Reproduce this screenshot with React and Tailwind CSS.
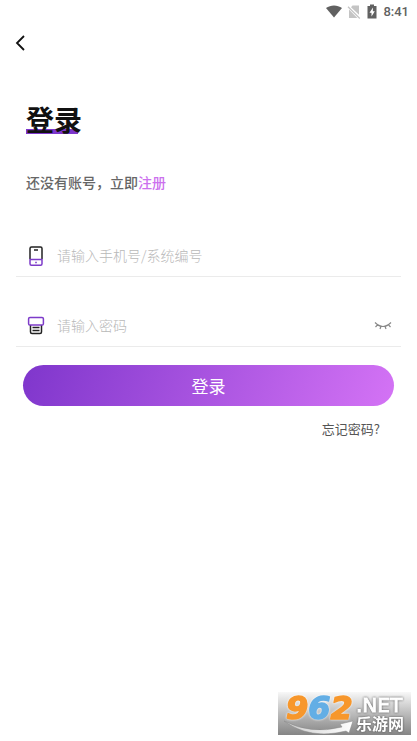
import React from "react";

function StatusBar() {
  return (
    <div className="flex h-6 items-center justify-end px-[2px] text-[#616161]">
      <svg className="h-4 w-4" viewBox="0 0 16 16" aria-hidden="true">
        <path d="M0 4C4.600 0.600 11.400 0.600 16 4L8 13.500Z" fill="currentColor" />
      </svg>
      <svg className="ml-1 h-4 w-4" viewBox="0 0 16 16" aria-hidden="true">
        <path d="M6.500 1.500H13V10.800L5 3.300ZM3 5.500L11.300 14H3Z" fill="#c4c4c4" />
        <path d="M2 2.800L13.800 14.500" stroke="#c4c4c4" strokeWidth="1.200" />
      </svg>
      <svg className="ml-1 h-4 w-3" viewBox="0 0 12 16" aria-hidden="true">
        <path d="M4 0.500h4v1.500h2.500V14.500h-9V2H4Z" fill="currentColor" />
        <path d="M7 3.500L3.500 8.700H5.500V12.500L8.800 7.300H6.800Z" fill="#fff" />
      </svg>
      <span className="ml-[5px] font-[Roboto,sans-serif] text-[13px] leading-4 font-medium">8:41</span>
    </div>
  );
}

function PhoneIcon() {
  return (
    <svg className="h-5 w-5 shrink-0" viewBox="0 0 20 20" fill="none" strokeWidth="1.500" aria-hidden="true">
      <path d="M4 13V2.500Q4 1 5.500 1H14.500Q16 1 16 2.500V13" stroke="#222" />
      <path d="M8 4H12" stroke="#222" />
      <path d="M4 13.600H16V17.700Q16 19.200 14.600 19.200H5.400Q4 19.200 4 17.700Z" stroke="#7d3bc9" />
      <path d="M9.200 16.500H10.800" stroke="#7d3bc9" strokeWidth="1.600" />
    </svg>
  );
}

function PasswordIcon() {
  return (
    <svg className="h-5 w-5 shrink-0" viewBox="0 0 20 20" fill="none" strokeWidth="1.500" aria-hidden="true">
      <path d="M4.500 8.500V16Q4.500 17.500 6 17.500H14Q15.500 17.500 15.500 16V8.500" stroke="#222" />
      <path d="M6.500 11.500H13.500M6.500 14.500H13.500" stroke="#222" />
      <path d="M4.500 9H3.800Q2.600 9 2.600 7.700V2.800Q2.600 1.500 4 1.500H16Q17.400 1.500 17.400 2.800V7.700Q17.400 9 16.200 9Z" fill="#fff" stroke="#7d3bc9" />
    </svg>
  );
}

function Field({ id, label, type, icon, children }) {
  return (
    <div className="flex h-[42px] items-center border-b border-[#ebebeb] pr-2 pl-[10px]">
      {icon}
      <label htmlFor={id} className="sr-only">{label}</label>
      <input
        id={id}
        type={type}
        placeholder={label}
        className="ml-[11px] h-10 min-w-0 flex-1 bg-transparent pb-[2px] text-[14px] leading-normal font-light text-[#333] outline-none placeholder:text-[#b8b8b8]"
      />
      {children}
    </div>
  );
}

function Watermark() {
  return (
    <div className="absolute right-0 bottom-0 h-[43px] w-[133px] bg-linear-to-b from-[#f8f8f8] via-[#bcbcbc] to-[#858585]">
      <svg className="h-full w-full overflow-visible" viewBox="0 0 133 43" role="img" aria-label="962.NET 乐游网">
        <defs>
          <linearGradient id="swoosh" x1="0" x2="1">
            <stop offset="0" stopColor="#ccc" />
            <stop offset="1" stopColor="#fff" />
          </linearGradient>
        </defs>
        <path d="M6 29Q33 43 64 35L62 32L75 29L71 41L68 39Q32 48 6 29Z" fill="url(#swoosh)" stroke="#888" strokeWidth="0.500" />
        <g className="font-['DejaVu_Sans',sans-serif] text-[32px] font-bold italic drop-shadow-[0_0_1px_#fff]" strokeWidth="1.500" strokeLinejoin="round">
          <text x="8" y="27" fill="#f7972c" stroke="#f7972c">9<tspan fill="#63aee5" stroke="#63aee5">6</tspan>2</text>
        </g>
        <g fill="#fff" className="drop-shadow-[0_0_1px_#555]">
          <text x="78" y="20" stroke="#fff" strokeWidth="1" className="font-['DejaVu_Sans',sans-serif] text-[20px]">.NET</text>
          <text x="78" y="38" className="font-['Noto_Sans_CJK_SC',sans-serif] text-[16px] font-bold">乐游网</text>
        </g>
      </svg>
    </div>
  );
}

export default function App() {
  return (
    <div className="min-h-screen bg-white pr-[6px] pb-[6px] font-['Noto_Sans_CJK_SC',sans-serif]">
      <div className="relative min-h-[calc(100vh-6px)]">
        <StatusBar />
        <button type="button" aria-label="返回" className="ml-[9px] flex h-[38px] w-6 items-center justify-center">
          <svg className="h-5 w-5" viewBox="0 0 20 20" fill="none" aria-hidden="true">
            <path d="M13 3L6 10L13 17" stroke="#111" strokeWidth="1.800" />
          </svg>
        </button>
        <main className="px-[10px] pl-4">
          <header className="mt-[37px] pl-[10px]">
            <h1 className="flex h-10 items-center bg-linear-to-r from-[#7d37cc] to-[#7d37cc] bg-[length:52px_5px] bg-[position:0_30px] bg-no-repeat text-[28px] leading-10 font-bold text-[#111]">登录</h1>
            <p className="mt-[33px] text-[14px] leading-5 font-medium text-[#666]">
              还没有账号，立即<a href="#register" className="text-[#cc71ee]">注册</a>
            </p>
          </header>
          <form className="mt-[43px]" onSubmit={(e) => e.preventDefault()}>
            <Field id="account" type="text" label="请输入手机号/系统编号" icon={<PhoneIcon />} />
            <div className="mt-7">
              <Field id="password" type="password" label="请输入密码" icon={<PasswordIcon />}>
                <button type="button" aria-label="显示密码" className="flex h-8 w-5 items-center justify-center">
                  <svg className="h-5 w-5" viewBox="0 0 20 20" fill="none" stroke="#888" strokeWidth="1.200" aria-hidden="true">
                    <path d="M2 6.500Q10 14.500 18 6.500M4.500 8.800L2.500 11M8 10.300L7 13M12 10.300L13 13M15.500 8.800L17.500 11" />
                  </svg>
                </button>
              </Field>
            </div>
            <div className="pr-[7px] pl-[7px]">
              <button type="submit" className="mt-[18px] h-[41px] w-full rounded-full bg-linear-[110deg] from-[#7f36cc] to-[#d473f5] text-[17px] leading-6 text-white">登录</button>
            </div>
            <div className="mt-3 flex justify-end pr-[21px]">
              <a href="#forgot" className="text-[13px] leading-[22px] text-[#555]">忘记密码?</a>
            </div>
          </form>
        </main>
        <Watermark />
      </div>
    </div>
  );
}
